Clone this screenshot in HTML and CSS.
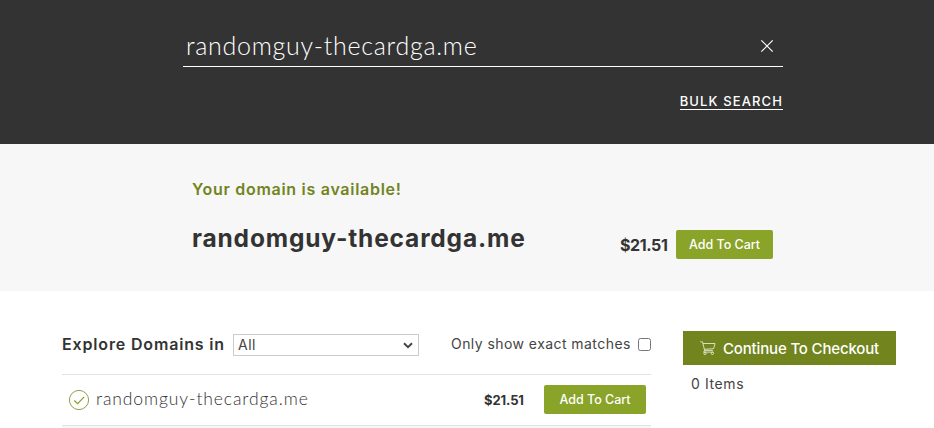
FILE: index.html
```html
<!DOCTYPE html>
<html lang="en">
<head>
<meta charset="utf-8">
<title>Domain search</title>
<link rel="stylesheet" href="styles.css">
</head>
<body>
<header class="hero">
  <div class="search">
    <span class="query">randomguy-thecardga.me</span>
    <svg class="clear" width="14" height="14" viewBox="0 0 14 14"><path d="M1.3 1.3l11.4 11.4M12.7 1.3L1.3 12.7" fill="none" stroke="#fff" stroke-width="1.2"/></svg>
  </div>
  <a class="bulk">BULK SEARCH</a>
</header>
<section class="result">
  <div class="notice">Your domain is available!</div>
  <div class="result-row">
    <h1 class="domain">randomguy-thecardga.me</h1>
    <span class="price">$21.51</span>
    <button class="add">Add To Cart</button>
  </div>
</section>
<main class="main">
  <div class="explore">
    <div class="filters">
      <span class="label">Explore Domains in</span>
      <div class="select"><span>All</span><svg width="10" height="7" viewBox="0 0 10 7"><path d="M1 1.2l4 4 4-4" fill="none" stroke="#444" stroke-width="2"/></svg></div>
      <span class="exact">Only show exact matches</span>
      <span class="check"></span>
    </div>
    <div class="row">
      <svg class="tick" width="22" height="22" viewBox="0 0 22 22"><g fill="none" stroke="#8aa329"><circle cx="11" cy="11" r="9.6" stroke="#8aa24a"/><path d="M6.3 11.5l3.3 3.1 6.6-6.7" stroke-width="1.3"/></g></svg>
      <span class="row-name">randomguy-thecardga.me</span>
      <span class="row-price">$21.51</span>
      <button class="add wide">Add To Cart</button>
    </div>
    <div class="row-next"></div>
  </div>
  <aside class="cart">
    <button class="checkout">
      <svg width="16" height="14" viewBox="0 0 16 14"><g fill="none" stroke="#e3e8cf" stroke-width="0.9"><path d="M.3.8h2.2l2.1 8.6h8.2M3 2.5h12l-1.4 5.2-9.3.6M4.6 9.4l-.9 1.7h9.7"/><circle cx="5" cy="12.3" r="1.2"/><circle cx="12.4" cy="12.3" r="1.2"/></g></svg>
      <span>Continue To Checkout</span>
    </button>
    <div class="items">0 Items</div>
  </aside>
</main>
</body>
</html>
```
FILE: styles.css
```css
* { box-sizing: border-box; }
body { margin: 0; width: 934px; height: 428px; overflow: hidden; background: #fff; color: #333; font-family: Inter, "Liberation Sans", sans-serif; white-space: nowrap; }
button { border: 0; padding: 0; font-family: inherit; color: #fff; }
.hero { height: 144px; padding: 26px 151px 0 183px; background: #333; color: #fff; display: flex; flex-direction: column; align-items: flex-end; }
.search { width: 600px; height: 41px; border-bottom: 1px solid #fff; padding: 0 9px 0 3px; display: flex; align-items: center; justify-content: space-between; }
.query { margin-top: -2px; font: 300 25px/40px Lato, sans-serif; letter-spacing: 0.72px; }
.bulk { margin-top: 26px; height: 17px; border-bottom: 1px solid #fff; font-size: 13px; font-weight: 500; line-height: 17px; letter-spacing: 1.12px; }
.result { height: 147px; padding: 35px 161px 0 192px; background: #f7f7f7; }
.notice { height: 20px; color: #71841e; font-size: 16px; font-weight: 600; line-height: 20px; letter-spacing: 0.71px; }
.result-row { height: 60px; margin-top: 15px; display: flex; align-items: center; }
.domain { margin: 0 0 12px; width: 428px; font-size: 24.5px; font-weight: 650; line-height: 30px; letter-spacing: 0.83px; }
.price { width: 56px; font-size: 16px; font-weight: 700; letter-spacing: -0.4px; line-height: 20px; margin-top: 1px; }
.add { width: 97px; height: 29px; border-radius: 2px; background: #8aa329; font-size: 12.5px; font-weight: 500; line-height: 29px; }
.main { padding: 40px 38px 0 62px; display: flex; gap: 32px; }
.explore { width: 589px; }
.filters { height: 43px; padding-top: 3px; display: flex; align-items: flex-start; }
.label { width: 171px; font-size: 16px; font-weight: 600; line-height: 21px; letter-spacing: 0.84px; }
.select { width: 186px; height: 22px; border: 1px solid #ccc; padding: 0 5px 0 4px; display: flex; align-items: center; justify-content: space-between; color: #444; font-size: 14px; line-height: 18px; letter-spacing: 0.5px; }
.exact { margin-left: 32px; width: 187px; color: #444; font-size: 14px; line-height: 20px; letter-spacing: 0.44px; }
.check { width: 13px; height: 13px; margin-top: 4px; border: 1px solid #767676; border-radius: 2.5px; }
.row { height: 51px; border-top: 1px solid #e2e2e2; padding: 0 5px 0 6px; display: flex; align-items: center; }
.row-name { margin-left: 6px; width: 388px; font: 300 17.5px/20px Lato, sans-serif; letter-spacing: 0.9px; margin-top: -2px; }
.row-price { width: 60px; font-size: 13px; font-weight: 700; letter-spacing: -0.1px; }
.wide { width: 102px; margin-top: -1px; }
.row-next { height: 3px; border-top: 1px solid #e2e2e2; background: #f7f7f7; }
.cart { width: 213px; }
.checkout { width: 213px; height: 34px; background: #71841e; display: flex; align-items: center; padding-left: 17px; gap: 7px; font-size: 15px; font-weight: 500; letter-spacing: -0.16px; }
.items { margin: 9px 0 0 8px; color: #444; font-size: 14px; line-height: 20px; letter-spacing: 0.6px; }
```
